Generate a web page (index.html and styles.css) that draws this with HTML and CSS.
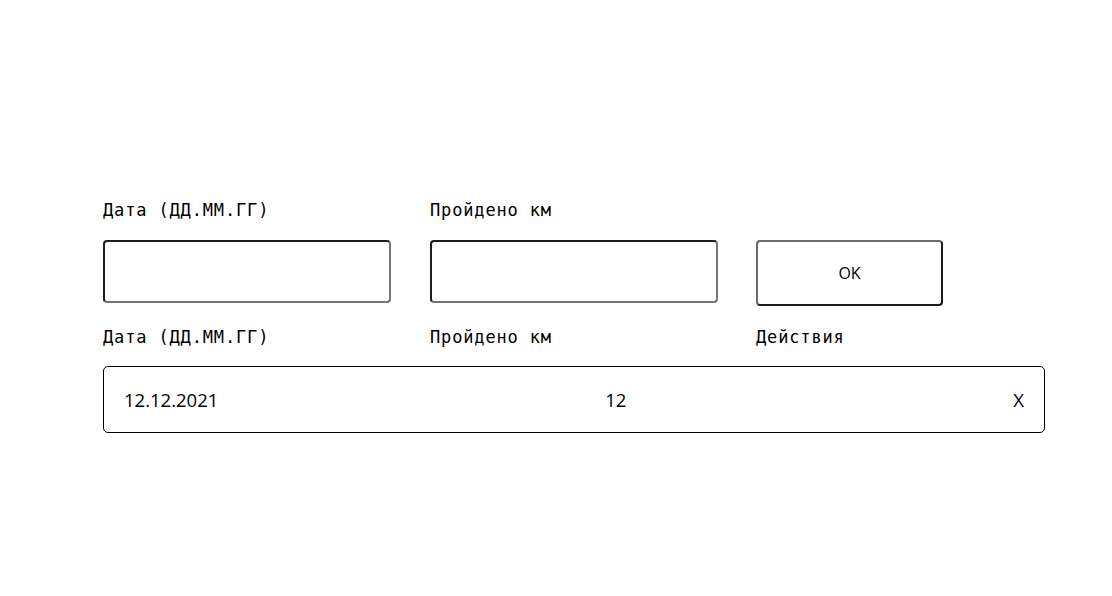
FILE: index.html
```html
<!DOCTYPE html>
<html lang="ru">
<head>
<meta charset="utf-8">
<title>Пробег</title>
<link rel="stylesheet" href="styles.css">
</head>
<body>
<main class="app">
  <form class="form">
    <label class="label" for="date">Дата (ДД.ММ.ГГ)</label>
    <label class="label" for="km">Пройдено км</label>
    <span></span>
    <input class="input" id="date" type="text">
    <input class="input" id="km" type="text">
    <button class="btn" type="button">OK</button>
  </form>
  <section class="list">
    <div class="head">
      <span class="label">Дата (ДД.ММ.ГГ)</span>
      <span class="label">Пройдено км</span>
      <span class="label">Действия</span>
    </div>
    <div class="row">
      <span>12.12.2021</span>
      <span>12</span>
      <span>X</span>
    </div>
  </section>
</main>
</body>
</html>
```
FILE: styles.css
```css
html, body { margin: 0; background: #fff; }
body { font-family: "Open Sans", "Liberation Sans", sans-serif; color: #000; }
.app { padding: 198px 0 0 103px; width: 942px; }
.form, .head {
  display: grid;
  grid-template-columns: 327px 326px 187px;
  align-items: start;
}
.form { row-gap: 18px; }
.label {
  font-family: "DejaVu Sans Mono", "Liberation Mono", monospace;
  font-size: 17px;
  line-height: 24px;
  letter-spacing: 0.85px;
  color: #000;
}
.input {
  box-sizing: border-box;
  height: 63px;
  width: 288px;
  margin: 0;
  border: 2px solid;
  border-color: #1e1e1e #767676 #767676 #1e1e1e;
  border-radius: 4px;
  background: #fff;
}
.btn {
  box-sizing: border-box;
  height: 66px;
  width: 187px;
  margin: 0;
  border: 2px solid;
  border-color: #6a6a6a #1e1e1e #1e1e1e #6a6a6a;
  border-radius: 4px;
  background: #fff;
  font-family: "Open Sans", "Liberation Sans", sans-serif;
  font-size: 16px;
  color: #000;
}
.list { margin-top: 19px; }
.row {
  margin-top: 17px;
  box-sizing: border-box;
  height: 67px;
  border: 1px solid #000;
  border-radius: 5px;
  padding: 0 20px;
  display: flex;
  justify-content: space-between;
  align-items: center;
  font-size: 18.5px;
}
```
